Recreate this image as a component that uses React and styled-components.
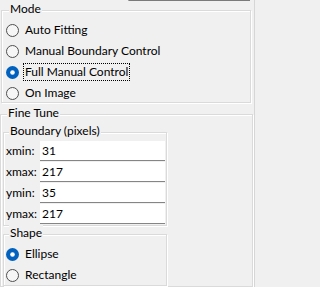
import React from 'react';
import styled, { createGlobalStyle } from 'styled-components';

const GlobalStyle = createGlobalStyle`
  html, body {
    margin: 0;
    padding: 0;
    background: #f0f0f0;
  }
  body {
    font-family: Lato, "Noto Sans", sans-serif;
    font-size: 12px;
    color: #000;
  }
`;

const Root = styled.div`
  width: 258px;
  height: 287px;
  overflow: hidden;
  display: flex;
  background: #f0f0f0;
`;

const Main = styled.div`
  width: 253px;
  display: flex;
  flex-direction: column;
`;

const Edge = styled.div`
  width: 3px;
  margin-left: 1px;
  border-left: 1px solid #d6d6d6;
`;

const TopField = styled.div`
  box-sizing: border-box;
  height: 2px;
  width: 122px;
  margin-left: 128px;
  border-bottom: 1px solid #7a7a7a;
  border-left: 1px solid #d0d0d0;
`;

const GroupBox = styled.div`
  position: relative;
  box-sizing: border-box;
  width: ${(p) => p.$w}px;
  height: ${(p) => (p.$h ? `${p.$h}px` : 'auto')};
  margin: ${(p) => p.$mt}px 0 0 ${(p) => p.$ml}px;
  padding: ${(p) => p.$pad};
  border: 1px solid #dadada;
  box-shadow: inset 1px 1px 0 #fff, 1px 1px 0 #fff;
`;

const Legend = styled.span`
  position: absolute;
  top: -10px;
  left: ${(p) => p.$x}px;
  padding: 0 1px;
  line-height: 16px;
  background: #f0f0f0;
  white-space: nowrap;
`;

const RadioRow = styled.div`
  height: 21px;
  display: flex;
  align-items: center;
  gap: 4px;
`;

const RadioMark = styled.svg`
  flex: none;
  width: 13px;
  height: 13px;
  margin-top: 1px;
`;

const RadioLabel = styled.span`
  box-sizing: border-box;
  height: 18px;
  line-height: 16px;
  padding: 0 1px;
  border: 1px ${(p) => (p.$focus ? 'dotted #000' : 'solid transparent')};
  white-space: nowrap;
`;

const FieldGrid = styled.div`
  display: grid;
  grid-template-columns: 34px 125px;
  row-gap: 1px;
`;

const FieldLabel = styled.label`
  line-height: 20px;
  white-space: nowrap;
`;

const Field = styled.input`
  box-sizing: border-box;
  width: 125px;
  height: 20px;
  margin: 0;
  padding: 0 2px;
  border: none;
  border-bottom: 1px solid #858585;
  background: #fff;
  font: inherit;
  line-height: 19px;
  color: #000;
  outline: none;
`;

const Radio = ({ checked, focus, children }) => (
  <RadioRow>
    <RadioMark viewBox="0 0 13 13">
      {checked ? (
        <>
          <circle cx="6.5" cy="6.5" r="6.5" fill="#0062be" />
          <circle cx="6.5" cy="6.5" r="2.3" fill="#fff" />
        </>
      ) : (
        <circle cx="6.5" cy="6.5" r="6" fill="#f6f6f6" stroke="#4e4e4e" strokeWidth="1" />
      )}
    </RadioMark>
    <RadioLabel $focus={focus}>{children}</RadioLabel>
  </RadioRow>
);

const modes = ['Auto Fitting', 'Manual Boundary Control', 'Full Manual Control', 'On Image'];

const bounds = [
  { name: 'xmin', value: '31' },
  { name: 'xmax', value: '217' },
  { name: 'ymin', value: '35' },
  { name: 'ymax', value: '217' },
];

export default function App() {
  return (
    <>
      <GlobalStyle />
      <Root>
        <Main>
          <TopField />

          <GroupBox $w={250} $h={93} $mt={9} $ml={1} $pad="8px 0 0 4px">
            <Legend $x={7}>Mode</Legend>
            {modes.map((m, i) => (
              <Radio key={m} checked={i === 2} focus={i === 2}>
                {m}
              </Radio>
            ))}
          </GroupBox>

          <GroupBox $w={253} $h={180} $mt={11} $ml={0} $pad="17px 0 0 2px">
            <Legend $x={6}>Fine Tune</Legend>

            <GroupBox $w={164} $h={94} $mt={0} $ml={0} $pad="8px 1px 0 2px">
              <Legend $x={5}>Boundary (pixels)</Legend>
              <FieldGrid>
                {bounds.map((b) => (
                  <React.Fragment key={b.name}>
                    <FieldLabel>{b.name}:</FieldLabel>
                    <Field defaultValue={b.value} />
                  </React.Fragment>
                ))}
              </FieldGrid>
            </GroupBox>

            <GroupBox $w={164} $h={52} $mt={8} $ml={0} $pad="8px 0 0 2px">
              <Legend $x={5}>Shape</Legend>
              <Radio checked>Ellipse</Radio>
              <Radio>Rectangle</Radio>
            </GroupBox>
          </GroupBox>
        </Main>
        <Edge />
      </Root>
    </>
  );
}
